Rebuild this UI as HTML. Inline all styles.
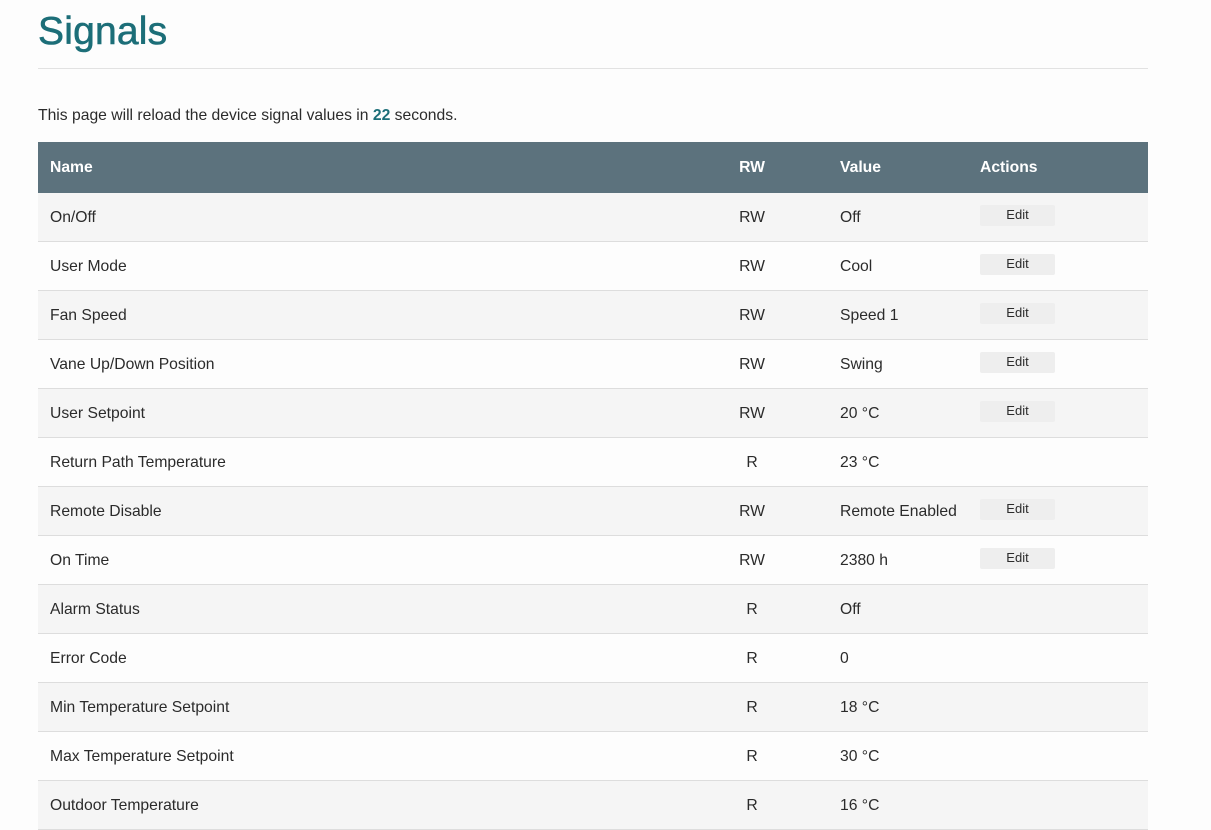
<!DOCTYPE html>
<html><head><meta charset="utf-8"><style>
body{margin:0;background:#fdfdfd;font-family:"Liberation Sans",sans-serif;color:#2b2b2b;}
.wrap{position:absolute;left:38px;width:1110px;top:0}
h1{margin:0;position:absolute;top:10px;left:0;font-size:39px;font-weight:normal;color:#1c6e78;letter-spacing:0.2px;-webkit-text-stroke:0.6px #1c6e78}
hr{position:absolute;top:68px;left:0;width:1110px;margin:0;border:0;border-top:1px solid #e2e2e2}
p{position:absolute;top:107px;left:0;margin:0;font-size:15.7px}
p b{color:#1c6e78}
table{position:absolute;top:142px;left:0;width:1110px;border-collapse:collapse;font-size:15.7px;table-layout:fixed}
th{background:#5c727d;color:#fff;text-align:left;height:50px;padding:1px 12px 0;font-size:15.7px}
td{height:46px;padding:2px 12px 0;border-bottom:1px solid #ddd;white-space:nowrap}
tr:nth-child(odd) td{background:#f5f5f5}
tr:nth-child(even) td{background:#fdfdfd}
.c{text-align:center}
.v{padding-left:40px}
.btn{display:inline-block;width:75px;height:21px;line-height:20px;background:#eeeeee;text-align:center;font-size:13px;border-radius:2px;position:relative;top:-3px}
</style></head><body><div class="wrap">
<h1>Signals</h1><hr>
<p>This page will reload the device signal values in <b>22</b> seconds.</p>
<table>
<colgroup><col style="width:666px"><col style="width:96px"><col style="width:168px"><col style="width:180px"></colgroup>
<thead><tr><th>Name</th><th class="c">RW</th><th class="v">Value</th><th>Actions</th></tr></thead>
<tbody>
<tr><td>On/Off</td><td class="c">RW</td><td class="v">Off</td><td><span class="btn">Edit</span></td></tr>
<tr><td>User Mode</td><td class="c">RW</td><td class="v">Cool</td><td><span class="btn">Edit</span></td></tr>
<tr><td>Fan Speed</td><td class="c">RW</td><td class="v">Speed 1</td><td><span class="btn">Edit</span></td></tr>
<tr><td>Vane Up/Down Position</td><td class="c">RW</td><td class="v">Swing</td><td><span class="btn">Edit</span></td></tr>
<tr><td>User Setpoint</td><td class="c">RW</td><td class="v">20 °C</td><td><span class="btn">Edit</span></td></tr>
<tr><td>Return Path Temperature</td><td class="c">R</td><td class="v">23 °C</td><td></td></tr>
<tr><td>Remote Disable</td><td class="c">RW</td><td class="v">Remote Enabled</td><td><span class="btn">Edit</span></td></tr>
<tr><td>On Time</td><td class="c">RW</td><td class="v">2380 h</td><td><span class="btn">Edit</span></td></tr>
<tr><td>Alarm Status</td><td class="c">R</td><td class="v">Off</td><td></td></tr>
<tr><td>Error Code</td><td class="c">R</td><td class="v">0</td><td></td></tr>
<tr><td>Min Temperature Setpoint</td><td class="c">R</td><td class="v">18 °C</td><td></td></tr>
<tr><td>Max Temperature Setpoint</td><td class="c">R</td><td class="v">30 °C</td><td></td></tr>
<tr><td>Outdoor Temperature</td><td class="c">R</td><td class="v">16 °C</td><td></td></tr>
</tbody></table>
</div></body></html>
